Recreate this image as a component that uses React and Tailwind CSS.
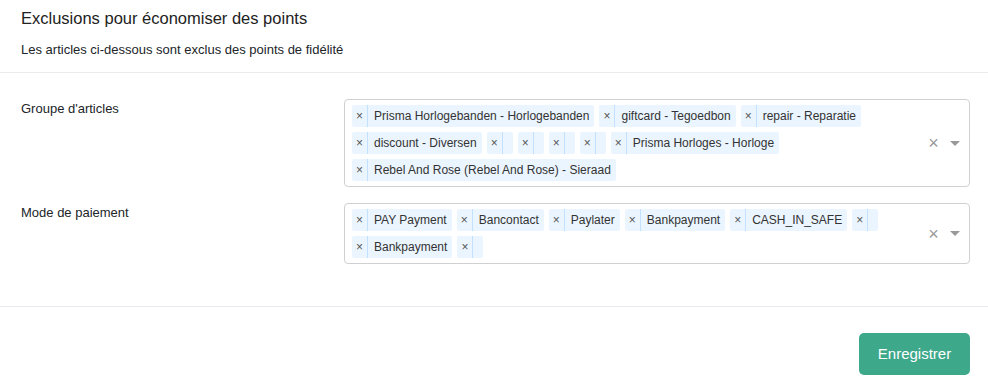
const articleGroups = [
  "Prisma Horlogebanden - Horlogebanden",
  "giftcard - Tegoedbon",
  "repair - Reparatie",
  "discount - Diversen",
  "",
  "",
  "",
  "",
  "Prisma Horloges - Horloge",
  "Rebel And Rose (Rebel And Rose) - Sieraad",
];

const paymentMethods = [
  "PAY Payment",
  "Bancontact",
  "Paylater",
  "Bankpayment",
  "CASH_IN_SAFE",
  "",
  "Bankpayment",
  "",
];

function Chip({ label }) {
  return (
    <div className="flex h-[22px] items-stretch rounded-[2px] bg-[#ebf5ff] text-[12px] leading-[22px]">
      <span className="flex w-[16px] items-center justify-center border-r border-[#c2e0ff] text-[#555]">
        ×
      </span>
      <span className={label ? "pl-[6px] pr-[5px] text-[#333]" : "px-[5px]"}>
        {label}
      </span>
    </div>
  );
}

function MultiSelect({ values }) {
  return (
    <div className="flex items-center rounded-[4px] border border-[#d0d0d0] bg-white">
      <div className="flex flex-1 flex-wrap gap-x-[5px] gap-y-[5px] pb-[5px] pl-[7px] pt-[5px]">
        {values.map((value, index) => (
          <Chip key={index} label={value} />
        ))}
      </div>
      <div className="flex w-[50px] items-center justify-end pr-[9px]">
        <span className="w-[17px] text-center text-[18px] leading-none text-[#999]">
          ×
        </span>
        <span className="ml-[8px] mt-[2px] h-0 w-0 border-x-[5px] border-b-[2.5px] border-t-[5px] border-x-transparent border-b-transparent border-t-[#999]" />
      </div>
    </div>
  );
}

export default function App() {
  return (
    <div className="min-h-screen bg-white font-['Liberation_Sans',Arial,sans-serif] text-[#222]">
      <div className="border-b border-[#ececec] pb-[12px] pl-[21px] pr-[18px] pt-[6px]">
        <h1 className="text-[16.5px] font-normal leading-[24px]">
          Exclusions pour économiser des points
        </h1>
        <p className="mt-[10px] text-[13px] leading-[20px] text-[#212529]">
          Les articles ci-dessous sont exclus des points de fidélité
        </p>
      </div>

      <div className="border-b border-[#e8ecf1] pb-[42px] pl-[21px] pr-[18px] pt-[26px]">
        <div className="grid grid-cols-[323px_1fr]">
          <label className="text-[13px] leading-[19px] text-[#212529]">
            Groupe d'articles
          </label>
          <MultiSelect values={articleGroups} />
        </div>
        <div className="mt-[16px] grid grid-cols-[323px_1fr]">
          <label className="text-[13px] leading-[19px] text-[#212529]">
            Mode de paiement
          </label>
          <MultiSelect values={paymentMethods} />
        </div>
      </div>

      <div className="flex justify-end pb-[12px] pl-[21px] pr-[18px] pt-[26px]">
        <button className="h-[42px] w-[111px] rounded-[5px] bg-[#3ea88b] text-[15px] text-white">
          Enregistrer
        </button>
      </div>
    </div>
  );
}
